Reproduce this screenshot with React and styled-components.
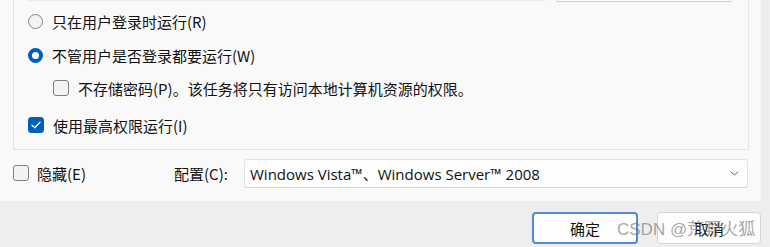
import styled, { createGlobalStyle } from "styled-components";

const Global = createGlobalStyle`
    html, body {
        margin: 0;
        padding: 0;
        background: #eeeeee;
    }
    body {
        font-family: "Noto Sans CJK SC", "Noto Sans", sans-serif;
        color: #111111;
    }
`;

const Window = styled.div`
    width: 770px;
    height: 247px;
    display: flex;
    flex-direction: column;
    overflow: hidden;
    background: #eeeeee;
`;

const Panel = styled.div`
    width: 761px;
    height: 201px;
    box-sizing: border-box;
    padding-left: 13px;
    background: #f9f9f9;
    display: flex;
    flex-direction: column;
`;

const GroupBox = styled.div`
    width: 736px;
    box-sizing: border-box;
    border: 1px solid #e6e6e6;
    border-top: none;
    padding: 0 0 4px 14px;
    display: flex;
    flex-direction: column;
`;

const PeekRow = styled.div`
    height: 3px;
    display: flex;
    align-items: flex-start;
`;

const PeekField = styled.div`
    width: 517px;
    height: 1px;
    background: #ececec;
`;

const PeekButton = styled.div`
    margin-left: 11px;
    width: 175px;
    height: 2px;
    box-sizing: border-box;
    border: 1px solid #cfcfcf;
    border-top: none;
    border-radius: 0 0 4px 4px;
    background: #fdfdfd;
`;

const OptionRow = styled.label`
    height: ${(props) => props.h}px;
    display: flex;
    align-items: center;
    padding-left: ${(props) => props.indent || 0}px;
    font-size: 15px;
    line-height: 1;
    white-space: nowrap;
`;

const Radio = styled.span`
    width: 15px;
    height: 15px;
    box-sizing: border-box;
    border-radius: 50%;
    flex: none;
    margin-right: 9px;
    border: ${(props) => (props.checked ? "4.5px solid #005fb8" : "1px solid #858585")};
    background: ${(props) => (props.checked ? "#ffffff" : "#f3f3f3")};
`;

const Box = styled.span`
    width: 16px;
    height: 16px;
    box-sizing: border-box;
    border-radius: 3px;
    flex: none;
    margin-right: ${(props) => props.gap || 9}px;
    display: flex;
    align-items: center;
    justify-content: center;
    border: 1px solid ${(props) => (props.checked ? "#005fb8" : "#808080")};
    background: ${(props) => (props.checked ? "#005fb8" : "#f3f3f3")};
`;

const BottomRow = styled.div`
    flex: 1;
    display: flex;
    align-items: center;
    padding-bottom: 5px;
    font-size: 15px;
    white-space: nowrap;
`;

const HideLabel = styled.label`
    display: flex;
    align-items: center;
    width: 161px;
`;

const ConfigLabel = styled.span`
    width: 70px;
`;

const Select = styled.div`
    width: 504px;
    height: 29px;
    box-sizing: border-box;
    background: #fdfdfd;
    border: 1px solid #e3e3e3;
    border-bottom-color: #d6d6d6;
    border-radius: 3px;
    display: flex;
    align-items: center;
    justify-content: space-between;
    padding: 0 8px 0 5px;
`;

const SelectText = styled.span`
    font-family: "Open Sans", "Noto Sans CJK SC", sans-serif;
    font-size: 15px;
`;

const Footer = styled.div`
    position: relative;
    flex: 1;
    display: flex;
    justify-content: flex-end;
    align-items: flex-start;
    gap: 19px;
    padding: 11px 9px 0 0;
`;

const Button = styled.button`
    width: ${(props) => props.w}px;
    height: 32px;
    box-sizing: border-box;
    border-radius: 4px;
    background: #fdfdfd;
    font-family: "Noto Sans CJK SC", sans-serif;
    font-size: 15px;
    color: #111111;
    padding: 0;
    border: ${(props) => (props.primary ? "2px solid #4c8fd8" : "1px solid #d4d4d4")};
`;

const Watermark = styled.span`
    position: absolute;
    left: 617px;
    top: 14px;
    font-family: "Liberation Sans", "Noto Sans CJK SC", sans-serif;
    font-size: 17px;
    color: rgba(110, 110, 110, 0.62);
    white-space: nowrap;
    pointer-events: none;
`;

const Check = () => (
    <svg width="10" height="8" viewBox="0 0 10 8" fill="none">
        <path d="M1 4.2 L3.8 6.8 L9 1.2" stroke="#ffffff" strokeWidth="1.3" strokeLinecap="round" strokeLinejoin="round" />
    </svg>
);

const Chevron = () => (
    <svg width="9" height="5" viewBox="0 0 9 5" fill="none">
        <path d="M1 1 L4.5 4 L8 1" stroke="#6a6a6a" strokeWidth="1" strokeLinecap="round" strokeLinejoin="round" />
    </svg>
);

const App = () => {
    return (
        <Window>
            <Global />
            <Panel>
                <GroupBox>
                    <PeekRow>
                        <PeekField />
                        <PeekButton />
                    </PeekRow>
                    <OptionRow h={36}>
                        <Radio />
                        只在用户登录时运行(R)
                    </OptionRow>
                    <OptionRow h={32}>
                        <Radio checked />
                        不管用户是否登录都要运行(W)
                    </OptionRow>
                    <OptionRow h={34} indent={25}>
                        <Box />
                        不存储密码(P)。该任务将只有访问本地计算机资源的权限。
                    </OptionRow>
                    <OptionRow h={40}>
                        <Box checked>
                            <Check />
                        </Box>
                        使用最高权限运行(I)
                    </OptionRow>
                </GroupBox>
                <BottomRow>
                    <HideLabel>
                        <Box gap={8} />
                        隐藏(E)
                    </HideLabel>
                    <ConfigLabel>配置(C):</ConfigLabel>
                    <Select>
                        <SelectText>Windows Vista™、Windows Server™ 2008</SelectText>
                        <Chevron />
                    </Select>
                </BottomRow>
            </Panel>
            <Footer>
                <Button primary w={106}>确定</Button>
                <Button w={104}>取消</Button>
                <Watermark>CSDN @荒野火狐</Watermark>
            </Footer>
        </Window>
    );
};

export default App;
